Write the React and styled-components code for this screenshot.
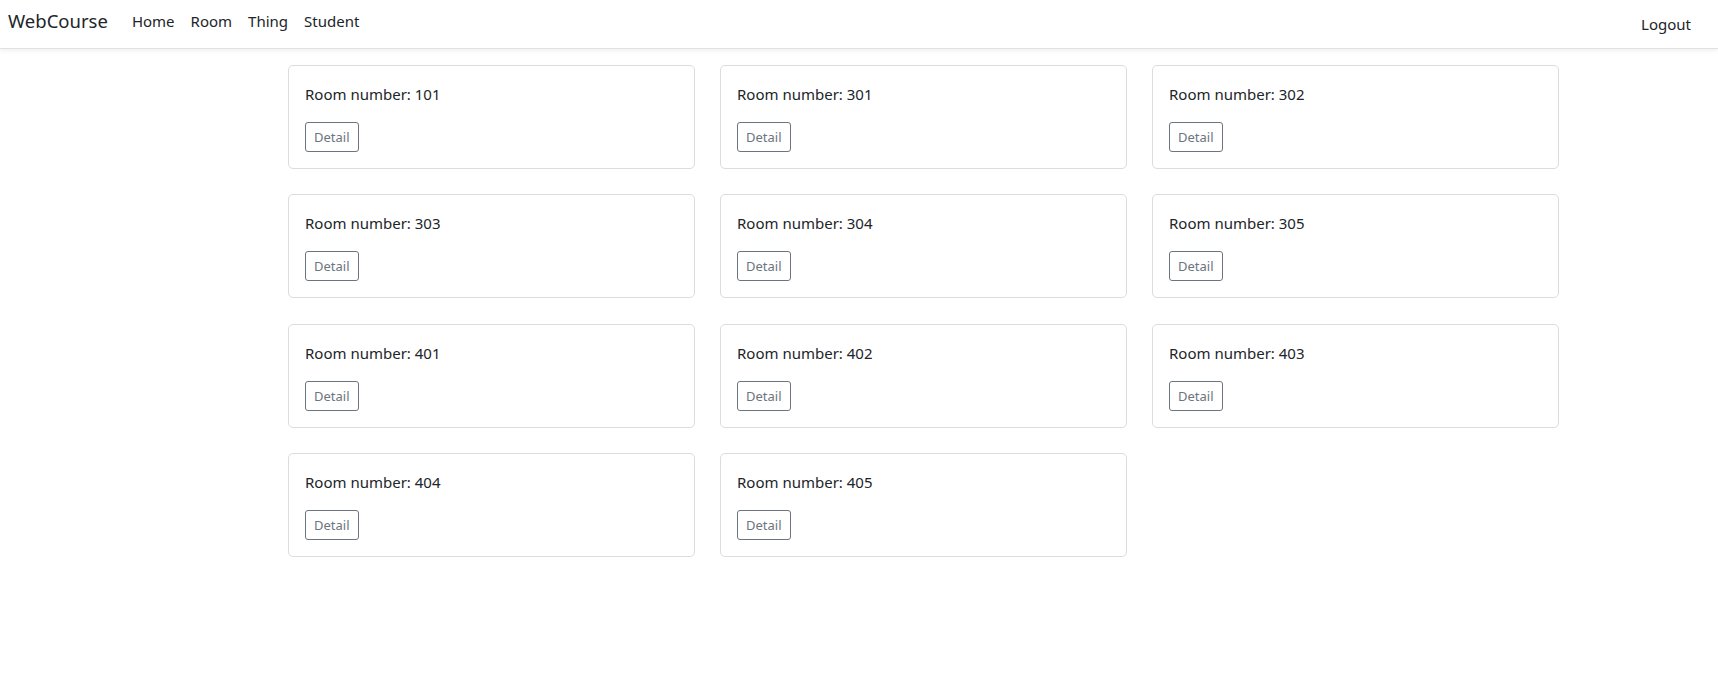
import styled, { createGlobalStyle } from "styled-components";

const GlobalStyle = createGlobalStyle`
  body {
    margin: 0;
    background: #ffffff;
    color: #212529;
    font-family: "Noto Sans", "Open Sans", sans-serif;
    font-size: 16px;
    line-height: 1.5;
  }
`;

const rooms = [101, 301, 302, 303, 304, 305, 401, 402, 403, 404, 405];

const NavBar = styled.nav`
  height: 48px;
  display: flex;
  align-items: center;
  justify-content: space-between;
  padding: 0 19px 0 8px;
  background: #ffffff;
  border-bottom: 1px solid #dee2e6;
  box-shadow: 0 2px 4px rgba(0, 0, 0, 0.06);
`;

const NavLeft = styled.div`
  display: flex;
  align-items: center;
  margin-bottom: 6px;
`;

const Brand = styled.a`
  font-size: 18.5px;
  color: #212529;
  margin-right: 16px;
  text-decoration: none;
`;

const NavLink = styled.a`
  font-size: 15px;
  color: #212529;
  padding: 8px 8px;
  text-decoration: none;
`;

const Grid = styled.main`
  display: grid;
  grid-template-columns: repeat(3, 407px);
  column-gap: 25px;
  row-gap: 25.3px;
  margin: 16px 0 0 288px;
`;

const Card = styled.div`
  display: flex;
  flex-direction: column;
  align-items: flex-start;
  border: 1px solid #dcdcdc;
  border-radius: 5px;
  padding: 16px;
  background: #ffffff;
`;

const RoomText = styled.p`
  margin: 0 0 16px;
  font-size: 15px;
  line-height: 24px;
`;

const DetailButton = styled.button`
  height: 30px;
  padding: 0 8px;
  font-family: inherit;
  font-size: 13px;
  color: #6c757d;
  background: transparent;
  border: 1px solid #6c757d;
  border-radius: 3px;
  cursor: pointer;
`;

const App = () => {
  return (
    <>
      <GlobalStyle />
      <NavBar>
        <NavLeft>
          <Brand href="#">WebCourse</Brand>
          <NavLink href="#">Home</NavLink>
          <NavLink href="#">Room</NavLink>
          <NavLink href="#">Thing</NavLink>
          <NavLink href="#">Student</NavLink>
        </NavLeft>
        <NavLink href="#">Logout</NavLink>
      </NavBar>
      <Grid>
        {rooms.map((number) => (
          <Card key={number}>
            <RoomText>Room number: {number}</RoomText>
            <DetailButton>Detail</DetailButton>
          </Card>
        ))}
      </Grid>
    </>
  );
};

export default App;
